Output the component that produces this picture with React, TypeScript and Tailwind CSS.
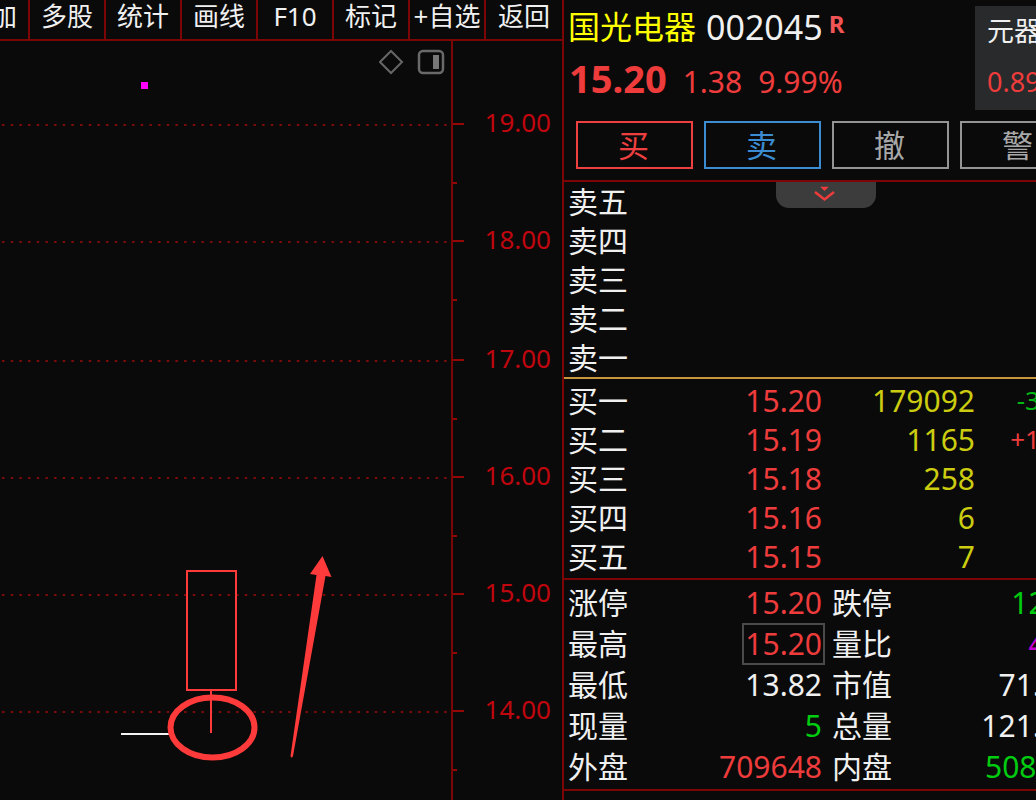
import { clsx } from 'clsx'

interface BookRow {
  label: string
  price?: string
  volume?: string
  change?: string
}

interface StatRow {
  label: string
  value: string
  tone: string
  boxed?: boolean
  label2: string
  value2: string
  tone2: string
}

const TOOLS = ['叠加', '多股', '统计', '画线', 'F10', '标记', '+自选', '返回']

const ASKS: BookRow[] = [
  { label: '卖五' },
  { label: '卖四' },
  { label: '卖三' },
  { label: '卖二' },
  { label: '卖一' },
]

const BIDS: BookRow[] = [
  { label: '买一', price: '15.20', volume: '179092', change: '-3' },
  { label: '买二', price: '15.19', volume: '1165', change: '+1' },
  { label: '买三', price: '15.18', volume: '258' },
  { label: '买四', price: '15.16', volume: '6' },
  { label: '买五', price: '15.15', volume: '7' },
]

const RED = 'text-[#ee3c3c]'
const GREEN = 'text-[#00cc10]'
const WHITE = 'text-[#f0f0f0]'

const STATS: StatRow[] = [
  { label: '涨停', value: '15.20', tone: RED, label2: '跌停', value2: '12.44', tone2: GREEN },
  { label: '最高', value: '15.20', tone: RED, boxed: true, label2: '量比', value2: '4.32', tone2: 'text-[#c400d0]' },
  { label: '最低', value: '13.82', tone: WHITE, label2: '市值', value2: '71.2亿', tone2: WHITE },
  { label: '现量', value: '5', tone: GREEN, label2: '总量', value2: '121.8万', tone2: WHITE },
  { label: '外盘', value: '709648', tone: RED, label2: '内盘', value2: '508352', tone2: GREEN },
]

const ACTIONS = [
  { label: '买', style: 'border-[#ee4040] text-[#ee4040]' },
  { label: '卖', style: 'border-[#3c8cd2] text-[#3c8cd2]' },
  { label: '撤', style: 'border-[#949494] text-[#a8a8a8]' },
  { label: '警', style: 'border-[#949494] text-[#a8a8a8]' },
]

// y of every whole price on the axis, relative to the top of the chart
const PRICES = [
  { label: '19.00', y: 83 },
  { label: '18.00', y: 200 },
  { label: '17.00', y: 319 },
  { label: '16.00', y: 436 },
  { label: '15.00', y: 553 },
  { label: '14.00', y: 670 },
]

function Toolbar() {
  return (
    <nav className="flex h-[41px] justify-end overflow-hidden border-b-2 border-[#7c0606]">
      {TOOLS.map((tool) => (
        <button
          key={tool}
          type="button"
          className="w-[76px] shrink-0 overflow-hidden whitespace-nowrap border-r-2 border-[#7c0606] pb-[7px] text-center text-[26px] leading-[32px] last:border-r-0"
        >
          {tool}
        </button>
      ))}
    </nav>
  )
}

function Plot() {
  return (
    <div className="relative min-w-0 flex-1">
      <svg className="block h-[759px] w-full" role="img" aria-label="K线图">
        {PRICES.map(({ label, y }) => (
          <line
            key={label}
            x1="2"
            x2="100%"
            y1={y + 1}
            y2={y + 1}
            stroke="#7c0c0c"
            strokeWidth="2"
            strokeDasharray="2.500 6.170"
          />
        ))}
        <rect x="141" y="41" width="7" height="7" fill="#ff00ff" />
        <rect x="187" y="530" width="49" height="119" fill="none" stroke="#ff3a3a" strokeWidth="2" />
        <line x1="121" x2="170" y1="693" y2="693" stroke="#f4f4f4" strokeWidth="2" />
        <line x1="211" x2="211" y1="650" y2="692" stroke="#ff3a3a" strokeWidth="2" />
        <ellipse cx="212.5" cy="686.5" rx="42" ry="30" fill="none" stroke="#ff3a3a" strokeWidth="6" />
        <path d="M322.500 515L331.500 536L325.500 535L293 715Q291.500 718 290.500 715L316.500 534L310 533Z" fill="#ff3a3a" />
      </svg>
      <div className="absolute right-1.5 top-2 flex items-center gap-3">
        <button type="button" aria-label="标注">
          <svg width="26" height="26" viewBox="0 0 26 26" fill="none" stroke="#666" strokeWidth="2">
            <path d="M12 2L23 13L12 24L1 13Z" />
          </svg>
        </button>
        <button type="button" aria-label="侧栏">
          <svg width="28" height="26" viewBox="0 0 28 26" fill="none">
            <rect x="2" y="2" width="24" height="22" rx="4" stroke="#6a6a6a" strokeWidth="2.500" />
            <rect x="16" y="6" width="6" height="14" fill="#777" />
          </svg>
        </button>
      </div>
    </div>
  )
}

function PriceAxis() {
  return (
    <svg className="block h-[759px] w-[111px] shrink-0 border-l-2 border-[#7c0606]" role="img" aria-label="价格">
      {PRICES.map(({ label, y }) => (
        <g key={label}>
          <line x1="0" x2="11" y1={y} y2={y} stroke="#960808" strokeWidth="2" />
          <line x1="0" x2="4" y1={y + 59} y2={y + 59} stroke="#960808" strokeWidth="2" />
          <text x="98" y={y + 8} textAnchor="end" fontSize="26" fill="#c0060e">
            {label}
          </text>
        </g>
      ))}
    </svg>
  )
}

function QuoteHeader() {
  return (
    <header className="border-b-2 border-[#7c0606] pb-[11px]">
      <div className="flex h-[121px] pt-[6px]">
        <div className="w-[411px] shrink-0 pl-1">
          <h1 className="flex h-[42px] items-center text-[32px] leading-[42px]">
            <span className="text-[#ffff00]">国光电器</span>
            <span className="ml-2.5 text-[34px]">002045</span>
            <sup className="top-0 ml-1.5 self-start text-2xl leading-9 font-bold text-[#f05454]">R</sup>
          </h1>
          <p className="mt-1.5 flex h-12 items-baseline pl-px text-[30px] leading-[48px] text-[#ee3c3c]">
            <strong className="text-[38px] font-bold">15.20</strong>
            <span className="ml-4">1.38</span>
            <span className="ml-4">9.99%</span>
          </p>
        </div>
        <aside className="h-[104px] w-[130px] shrink-0 bg-[#282a2c] pl-3 text-[27px]">
          <p className="leading-[50px]">元器件</p>
          <p className="leading-[52px] text-[#ee3c3c]">0.89%</p>
        </aside>
      </div>
      <div className="flex gap-[11px] pl-3">
        {ACTIONS.map(({ label, style }) => (
          <button
            key={label}
            type="button"
            className={clsx('h-12 w-[117px] shrink-0 border-2 pr-0.5 text-[31px] leading-[44px]', style)}
          >
            {label}
          </button>
        ))}
      </div>
    </header>
  )
}

function BookTable({ rows, label }: { rows: BookRow[]; label: string }) {
  return (
    <table aria-label={label} className="w-[476px] table-fixed text-[30px] whitespace-nowrap">
      <colgroup>
        <col className="w-[68px]" />
        <col className="w-[190px]" />
        <col className="w-[153px]" />
        <col className="w-[65px]" />
      </colgroup>
      <tbody>
        {rows.map((row) => (
          <tr key={row.label} className="h-[39px] leading-[39px]">
            <th scope="row" className="p-0 pl-1 text-left font-normal">{row.label}</th>
            <td className="p-0 text-right text-[#ee3c3c]">{row.price}</td>
            <td className="p-0 text-right text-[#cccc10]">{row.volume}</td>
            <td
              className={clsx(
                'p-0 text-right text-[26px]',
                row.change?.startsWith('-') ? 'text-[#00b814]' : 'text-[#ee3c3c]',
              )}
            >
              {row.change}
            </td>
          </tr>
        ))}
      </tbody>
    </table>
  )
}

function StatsTable() {
  return (
    <table aria-label="行情数据" className="w-[524px] table-fixed text-[30px] whitespace-nowrap">
      <colgroup>
        <col className="w-[68px]" />
        <col className="w-[190px]" />
        <col className="w-[78px]" />
        <col className="w-[188px]" />
      </colgroup>
      <tbody>
        {STATS.map((row) => (
          <tr key={row.label} className="h-[41px] leading-[41px]">
            <th scope="row" className="p-0 pl-1 text-left font-normal">{row.label}</th>
            <td className={clsx('p-0 text-right', row.tone)}>
              <span className={clsx(row.boxed && 'inline-block leading-9 outline-2 outline-offset-1 outline-[#4a4a4a]')}>
                {row.value}
              </span>
            </td>
            <th scope="row" className="p-0 pl-2.5 text-left font-normal">{row.label2}</th>
            <td className={clsx('p-0 text-right', row.tone2)}>{row.value2}</td>
          </tr>
        ))}
      </tbody>
    </table>
  )
}

export default function App() {
  return (
    <div className="flex min-h-screen overflow-hidden bg-[#0a0a0a] font-['Noto_Sans','Noto_Sans_CJK_SC',sans-serif] text-[#f0f0f0]">
      <main className="flex min-w-0 flex-1 flex-col">
        <Toolbar />
        <div className="flex">
          <Plot />
          <PriceAxis />
        </div>
      </main>
      <section className="w-[474px] shrink-0 overflow-hidden border-l-2 border-[#7c0606]">
        <QuoteHeader />
        <div className="relative border-b-2 border-[#c8963c]">
          <BookTable rows={ASKS} label="卖盘" />
          <button
            type="button"
            aria-label="展开"
            className="absolute top-0 left-[212px] flex h-[26px] w-[100px] justify-center rounded-b-[13px] bg-[#3c3c3c]"
          >
            <svg width="24" height="24" viewBox="0 0 24 24" fill="none" stroke="#ee3c3c">
              <path d="M1 10L10.500 17.500L20 10" strokeWidth="2.500" />
              <path d="M8 5.500L10.500 8L13 5.500Z" fill="#ee3c3c" strokeWidth="1.500" />
            </svg>
          </button>
        </div>
        <div className="border-b-2 border-[#7c0606] pt-[2px] pb-[2px]">
          <BookTable rows={BIDS} label="买盘" />
        </div>
        <div className="border-b-2 border-[#7c0606] pt-[2px] pb-[2px]">
          <StatsTable />
        </div>
      </section>
    </div>
  )
}
